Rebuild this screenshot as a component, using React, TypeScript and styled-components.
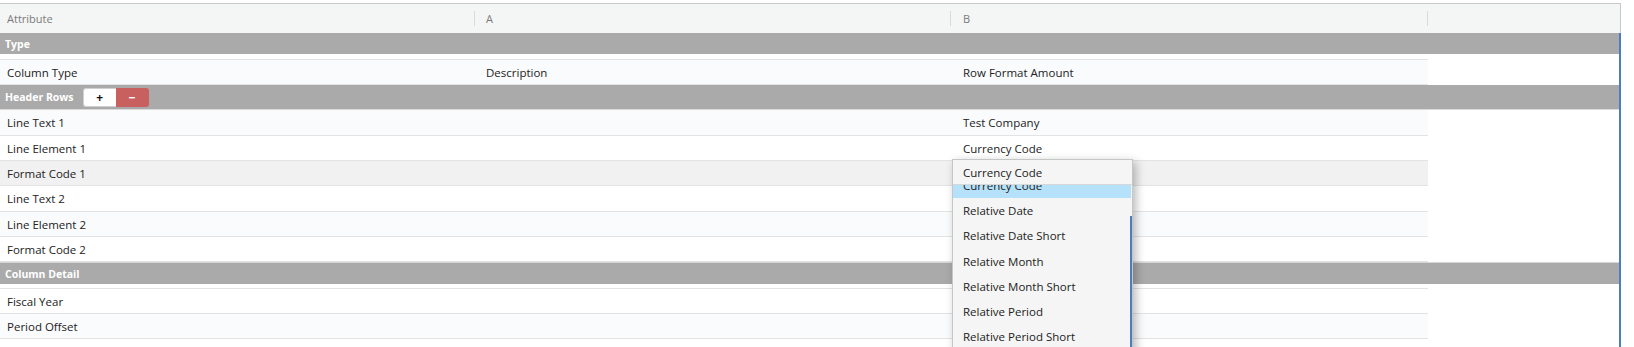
import React from "react";
import styled, { createGlobalStyle } from "styled-components";

const GlobalStyle = createGlobalStyle`
  html, body { margin: 0; padding: 0; background: #ffffff; }
  body { font-family: "Open Sans", "Noto Sans", Arial, sans-serif; font-size: 11.5px; color: #222; }
  * { box-sizing: border-box; }
`;

const Page = styled.div`
  position: relative;
  width: 1634px;
  height: 347px;
  overflow: hidden;
  padding-top: 3px;
`;

const Table = styled.div`
  width: 1621px;
`;

const cols = "475px 476px 477px 1fr";

const HeaderRow = styled.div`
  display: grid;
  grid-template-columns: ${cols};
  height: 30px;
  background: #f4f6f5;
  border-top: 1px solid #c6c9c8;
  border-right: 1px solid #c6c9c8;
`;

const HeaderCell = styled.div<{ $pad: number; $divider?: boolean }>`
  position: relative;
  display: flex;
  align-items: center;
  padding-left: ${(p) => p.$pad}px;
  color: #7b7b7b;
  font-size: 11px;
  &::after {
    content: "";
    display: ${(p) => (p.$divider ? "block" : "none")};
    position: absolute;
    right: 0;
    top: 7px;
    width: 1px;
    height: 15px;
    background: #d9dbda;
  }
`;

const Body = styled.div`
  width: 1621px;
  border-right: 2px solid #4d7dbd;
`;

const GroupRow = styled.div<{ $tall?: boolean; $gap?: number; $topLine?: boolean }>`
  display: flex;
  align-items: center;
  height: ${(p) => (p.$tall ? 25 : p.$topLine ? 22 : 21)}px;
  margin-bottom: ${(p) => p.$gap ?? 0}px;
  padding-left: 5px;
  background: #aaaaaa;
  color: #ffffff;
  font-weight: 700;
  font-size: 10.5px;
  border-top: ${(p) => (p.$topLine ? "1px solid #d6d6d6" : "none")};
  border-bottom: ${(p) => (p.$tall ? "1px solid #dadada" : "none")};
`;

const ButtonGroup = styled.div`
  display: flex;
  margin-left: 9px;
`;

const PlusButton = styled.button`
  width: 33px;
  height: 19px;
  padding: 0;
  border: 1px solid #d0d0d0;
  border-right: none;
  border-radius: 3px 0 0 3px;
  background: #ffffff;
  color: #111;
  font-family: "Open Sans", Arial, sans-serif;
  font-weight: 700;
  font-size: 12px;
  line-height: 17px;
`;

const MinusButton = styled.button`
  width: 33px;
  height: 19px;
  padding: 0;
  border: none;
  border-radius: 0 3px 3px 0;
  background: #c8605f;
  color: #ffffff;
  font-family: "Open Sans", Arial, sans-serif;
  font-weight: 700;
  font-size: 12px;
  line-height: 19px;
`;

const DataRow = styled.div<{ $bg: string; $topLine?: boolean; $h: number }>`
  display: grid;
  grid-template-columns: 475px 476px 477px;
  width: 1428px;
  height: ${(p) => p.$h + (p.$topLine ? 1 : 0)}px;
  background: ${(p) => p.$bg};
  border-top: ${(p) => (p.$topLine ? "1px solid #e3e3e3" : "none")};
  border-bottom: 1px solid #e3e3e3;
`;

const Cell = styled.div<{ $pad: number }>`
  display: flex;
  align-items: center;
  padding-left: ${(p) => p.$pad}px;
  color: #222;
  white-space: nowrap;
`;

const Dropdown = styled.div`
  position: absolute;
  left: 952px;
  top: 159px;
  width: 181px;
  height: 210px;
  background: #f4f5f4;
  border: 1px solid #c4c7c6;
  box-shadow: 3px 3px 9px rgba(0, 0, 0, 0.28);
`;

const SearchBox = styled.div`
  height: 25px;
  display: flex;
  align-items: center;
  padding-left: 10px;
  border-bottom: 1px solid #d7d9d8;
  color: #222;
`;

const List = styled.div`
  position: relative;
  height: 200px;
  overflow: hidden;
`;

const ListInner = styled.div`
  margin-top: -12px;
`;

const Option = styled.div<{ $selected?: boolean }>`
  height: 25.2px;
  display: flex;
  align-items: center;
  padding-left: 10px;
  margin-right: 1px;
  background: ${(p) => (p.$selected ? "#b5e1fb" : "transparent")};
  color: #222;
  white-space: nowrap;
`;

const ScrollThumb = styled.div`
  position: absolute;
  right: 0;
  top: 31px;
  width: 2px;
  height: 200px;
  background: #4d7dbd;
`;

type Row = { label: string; a?: string; b?: string; bg: string; topLine?: boolean; h?: number };

const typeRows: Row[] = [
  { label: "Column Type", a: "Description", b: "Row Format Amount", bg: "#fafbfd", topLine: true },
];

const headerRows: Row[] = [
  { label: "Line Text 1", b: "Test Company", bg: "#fafbfd", h: 26 },
  { label: "Line Element 1", b: "Currency Code", bg: "#ffffff" },
  { label: "Format Code 1", bg: "#f1f1f1" },
  { label: "Line Text 2", bg: "#ffffff", h: 26 },
  { label: "Line Element 2", bg: "#fafbfd" },
  { label: "Format Code 2", bg: "#ffffff" },
];

const detailRows: Row[] = [
  { label: "Fiscal Year", bg: "#ffffff", topLine: true },
  { label: "Period Offset", bg: "#fafbfd" },
  { label: "Period Type", bg: "#ffffff" },
];

const options = [
  "Relative Date",
  "Relative Date Short",
  "Relative Month",
  "Relative Month Short",
  "Relative Period",
  "Relative Period Short",
  "Relative Quarter",
];

function DataRows({ rows }: { rows: Row[] }) {
  return (
    <>
      {rows.map((r) => (
        <DataRow key={r.label} $bg={r.bg} $topLine={r.topLine} $h={r.h ?? 25}>
          <Cell $pad={7}>{r.label}</Cell>
          <Cell $pad={11}>{r.a ?? ""}</Cell>
          <Cell $pad={12}>{r.b ?? ""}</Cell>
        </DataRow>
      ))}
    </>
  );
}

export default function App() {
  return (
    <>
      <GlobalStyle />
      <Page>
        <Table>
          <HeaderRow>
            <HeaderCell $pad={7} $divider>Attribute</HeaderCell>
            <HeaderCell $pad={11} $divider>A</HeaderCell>
            <HeaderCell $pad={12} $divider>B</HeaderCell>
            <HeaderCell $pad={0} />
          </HeaderRow>
          <Body>
            <GroupRow $gap={5}>Type</GroupRow>
            <DataRows rows={typeRows} />
            <GroupRow $tall>
              Header Rows
              <ButtonGroup>
                <PlusButton>+</PlusButton>
                <MinusButton>−</MinusButton>
              </ButtonGroup>
            </GroupRow>
            <DataRows rows={headerRows} />
            <GroupRow $gap={4} $topLine>Column Detail</GroupRow>
            <DataRows rows={detailRows} />
          </Body>
        </Table>
        <Dropdown>
          <SearchBox>Currency Code</SearchBox>
          <List>
            <ListInner>
              <Option $selected>Currency Code</Option>
              {options.map((o) => (
                <Option key={o}>{o}</Option>
              ))}
            </ListInner>
            <ScrollThumb />
          </List>
        </Dropdown>
      </Page>
    </>
  );
}
